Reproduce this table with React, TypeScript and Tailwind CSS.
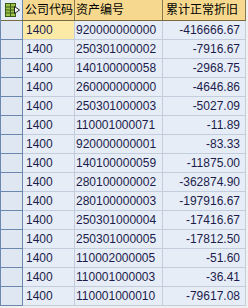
import React from "react";

const rows: [string, string, string][] = [
  ["1400", "920000000000", "-416666.67"],
  ["1400", "250301000002", "-7916.67"],
  ["1400", "140100000058", "-2968.75"],
  ["1400", "260000000000", "-4646.86"],
  ["1400", "250301000003", "-5027.09"],
  ["1400", "110001000071", "-11.89"],
  ["1400", "920000000001", "-83.33"],
  ["1400", "140100000059", "-11875.00"],
  ["1400", "280100000002", "-362874.90"],
  ["1400", "280100000003", "-197916.67"],
  ["1400", "250301000004", "-17416.67"],
  ["1400", "250301000005", "-17812.50"],
  ["1400", "110002000005", "-51.60"],
  ["1400", "110001000003", "-36.41"],
  ["1400", "110001000010", "-79617.08"],
];

function HeaderIcon() {
  return (
    <svg width="18" height="16" viewBox="0 0 18 16">
      <rect x="2.5" y="1.5" width="10" height="13" fill="#9bc24a" stroke="#3d5a16" />
      <line x1="2.5" y1="5" x2="12.5" y2="5" stroke="#3d5a16" />
      <line x1="2.5" y1="8" x2="12.5" y2="8" stroke="#3d5a16" />
      <line x1="2.5" y1="11" x2="12.5" y2="11" stroke="#3d5a16" />
      <line x1="7.5" y1="1.5" x2="7.5" y2="14.5" stroke="#3d5a16" />
      <path d="M11.5 4.5 L16.5 8 L11.5 11.5 Z" fill="#ffffff" stroke="#222222" />
    </svg>
  );
}

export default function App() {
  const font = { fontFamily: '"Liberation Sans", "Noto Sans CJK SC", sans-serif' };
  return (
    <div className="w-[248px] h-[308px] bg-[#f0f0f0] overflow-hidden text-[12px] text-[#1c1c4c]" style={font}>
      <div className="w-[246px] border-l border-[#6c88ae]">
        <div className="flex h-[21px] border-b border-[#7a6a40]">
          <div className="w-[22px] flex items-center justify-center bg-[#e4ecf6] border-r border-[#6c88ae]">
            <HeaderIcon />
          </div>
          <div className="w-[52px] flex items-center pl-[2px] bg-[#f6d98e] border-r border-[#8a7a50] text-black whitespace-nowrap overflow-hidden">公司代码</div>
          <div className="w-[88px] flex items-center pl-[1px] bg-[#f6d98e] border-r border-[#8a7a50] text-black whitespace-nowrap overflow-hidden">资产编号</div>
          <div className="w-[83px] flex items-center pl-[3px] bg-[#f6d98e] border-r border-[#8a7a50] text-black whitespace-nowrap overflow-hidden">累计正常折旧</div>
        </div>
        {rows.map((r, i) => (
          <div key={i} className="flex h-[19px]">
            <div className="w-[22px] bg-[#dfe7f2] border-r border-b border-[#6c88ae]" />
            <div className={`w-[52px] flex items-center pl-[3px] border-r border-b border-[#c3cddb] ${i === 0 ? "bg-[#fdeaa6]" : "bg-[#e6edf7]"}`}>{r[0]}</div>
            <div className="w-[88px] flex items-center pl-[1px] border-r border-b border-[#c3cddb] bg-[#e6edf7]">{r[1]}</div>
            <div className="w-[83px] flex items-center justify-end pr-[5px] border-r border-b border-[#c3cddb] bg-[#e6edf7]">{r[2]}</div>
          </div>
        ))}
      </div>
    </div>
  );
}
